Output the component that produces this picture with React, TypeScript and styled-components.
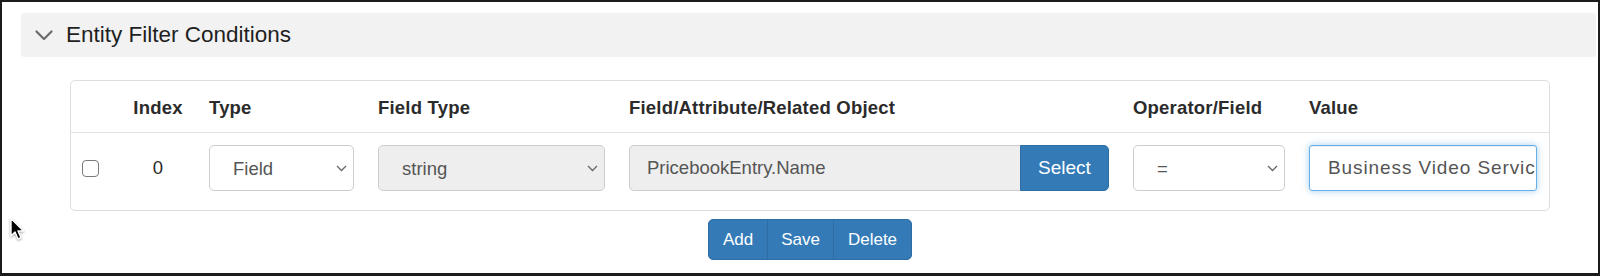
import React from "react";
import styled, { createGlobalStyle, css } from "styled-components";

const GlobalStyle = createGlobalStyle`
  html, body { margin: 0; padding: 0; background: #fff; }
  body { font-family: "Liberation Sans", Arial, Helvetica, sans-serif; }
  * { box-sizing: border-box; }
`;

const Frame = styled.div`
  position: relative;
  width: 1600px;
  height: 276px;
  border: 2px solid #1c1c1c;
  border-bottom-width: 3px;
  padding: 11px 2px 0 19px;
  overflow: hidden;
  background: #fff;
`;

const PanelHeader = styled.div`
  display: flex;
  align-items: center;
  height: 44px;
  padding-left: 14px;
  gap: 13px;
  background: #f2f2f2;
  border-radius: 3px;
`;

const Title = styled.span`
  font-size: 22.5px;
  color: #1f1f1f;
`;

const PanelBody = styled.div`
  display: flex;
  flex-direction: column;
  align-items: center;
  padding: 23px 46px 0 49px;
`;

const Table = styled.div`
  width: 100%;
  border: 1px solid #dedede;
  border-radius: 5px;
`;

const cols = "48px 78px 169px 251px 504px 176px 1fr";

const HeadRow = styled.div`
  display: grid;
  grid-template-columns: ${cols};
  height: 52px;
  align-items: center;
  border-bottom: 1px solid #e2e2e2;
  padding-top: 2px;
`;

const HeadCell = styled.div<{ $center?: boolean }>`
  padding: 0 12px;
  font-size: 18.5px;
  font-weight: 700;
  color: #2b2b2b;
  letter-spacing: 0.2px;
  text-align: ${(p) => (p.$center ? "center" : "left")};
  white-space: nowrap;
`;

const DataRow = styled.div`
  display: grid;
  grid-template-columns: ${cols};
  align-items: center;
  padding: 12px 0 19px;
`;

const Cell = styled.div<{ $center?: boolean; $padLeft?: number }>`
  padding: 0 12px 0 ${(p) => (p.$padLeft ?? 12)}px;
  font-size: 18.5px;
  color: #2b2b2b;
  display: flex;
  justify-content: ${(p) => (p.$center ? "center" : "flex-start")};
`;

const Check = styled.input`
  appearance: none;
  margin: 0;
  width: 17px;
  height: 17px;
  border: 1px solid #7a7a7a;
  border-radius: 4px;
  background: #fff;
`;

const SelectWrap = styled.div`
  position: relative;
  width: 100%;
  height: 46px;
`;

const NativeSelect = styled.select<{ $disabled?: boolean }>`
  appearance: none;
  width: 100%;
  height: 100%;
  margin: 0;
  padding: 0 30px 0 23px;
  font-family: "Liberation Sans", Arial, sans-serif;
  font-size: 18.5px;
  color: #555;
  border: 1px solid #cdcdcd;
  border-radius: 5px;
  background: ${(p) => (p.$disabled ? "#eeeeee" : "#fff")};
  outline: none;
`;

const Caret = styled.svg`
  position: absolute;
  right: 7px;
  top: 20px;
  width: 11px;
  height: 7px;
  pointer-events: none;
`;

const inputBase = css`
  height: 46px;
  margin: 0;
  font-family: "Liberation Sans", Arial, sans-serif;
  font-size: 18.5px;
  color: #555;
  outline: none;
`;

const InputGroup = styled.div`
  display: flex;
  width: 100%;
`;

const ReadInput = styled.input`
  ${inputBase};
  flex: 1;
  min-width: 0;
  padding: 0 12px 0 17px;
  background: #eeeeee;
  border: 1px solid #cdcdcd;
  border-right: none;
  border-radius: 5px 0 0 5px;
`;

const AddonButton = styled.button`
  width: 89px;
  height: 46px;
  margin: 0;
  font-family: "Liberation Sans", Arial, sans-serif;
  font-size: 19px;
  color: #fff;
  background: #337ab7;
  border: 1px solid #2e6da4;
  border-radius: 0 5px 5px 0;
`;

const ValueInput = styled.input`
  ${inputBase};
  width: 100%;
  padding: 0 0 0 18px;
  font-size: 19px;
  letter-spacing: 0.9px;
  background: #fff;
  border: 1px solid #66afe9;
  border-radius: 3px;
  box-shadow: inset 0 1px 1px rgba(0, 0, 0, 0.075), 0 0 7px rgba(102, 175, 233, 0.6);
`;

const ButtonGroup = styled.div`
  display: flex;
  margin-top: 8px;
`;

const GroupButton = styled.button<{ $pos: "first" | "mid" | "last" }>`
  height: 41px;
  padding: 0 13.5px;
  margin: 0 0 0 ${(p) => (p.$pos === "first" ? "0" : "-1px")};
  font-family: "Liberation Sans", Arial, sans-serif;
  font-size: 17px;
  color: #fff;
  background: #337ab7;
  border: 1px solid #2e6da4;
  border-radius: ${(p) =>
    p.$pos === "first" ? "5px 0 0 5px" : p.$pos === "last" ? "0 5px 5px 0" : "0"};
`;

const Pointer = styled.svg`
  position: absolute;
  left: 7px;
  top: 215px;
  width: 16px;
  height: 25px;
  filter: drop-shadow(0 1px 1px rgba(0, 0, 0, 0.35));
`;

const ChevronDown = () => (
  <svg width="18" height="11" viewBox="0 0 18 11" aria-hidden>
    <path d="M1.5 1.5 L9 9 L16.5 1.5" fill="none" stroke="#6b6b6b" strokeWidth="2.2" strokeLinecap="round" strokeLinejoin="round" />
  </svg>
);

const Select = ({ value, disabled }: { value: string; disabled?: boolean }) => (
  <SelectWrap>
    <NativeSelect $disabled={disabled} defaultValue={value}>
      <option value={value}>{value}</option>
    </NativeSelect>
    <Caret viewBox="0 0 11 7" aria-hidden>
      <path d="M1 1 L5.5 5.5 L10 1" fill="none" stroke="#666" strokeWidth="1.3" />
    </Caret>
  </SelectWrap>
);

export default function App() {
  return (
    <>
      <GlobalStyle />
      <Frame>
        <PanelHeader>
          <ChevronDown />
          <Title>Entity Filter Conditions</Title>
        </PanelHeader>
        <PanelBody>
          <Table>
            <HeadRow>
              <HeadCell />
              <HeadCell $center>Index</HeadCell>
              <HeadCell>Type</HeadCell>
              <HeadCell>Field Type</HeadCell>
              <HeadCell>Field/Attribute/Related Object</HeadCell>
              <HeadCell>Operator/Field</HeadCell>
              <HeadCell>Value</HeadCell>
            </HeadRow>
            <DataRow>
              <Cell $padLeft={11}>
                <Check type="checkbox" />
              </Cell>
              <Cell $center>0</Cell>
              <Cell>
                <Select value="Field" />
              </Cell>
              <Cell>
                <Select value="string" disabled />
              </Cell>
              <Cell>
                <InputGroup>
                  <ReadInput readOnly value="PricebookEntry.Name" />
                  <AddonButton>Select</AddonButton>
                </InputGroup>
              </Cell>
              <Cell>
                <Select value="=" />
              </Cell>
              <Cell>
                <ValueInput defaultValue="Business Video Services" />
              </Cell>
            </DataRow>
          </Table>
          <ButtonGroup>
            <GroupButton $pos="first">Add</GroupButton>
            <GroupButton $pos="mid">Save</GroupButton>
            <GroupButton $pos="last">Delete</GroupButton>
          </ButtonGroup>
        </PanelBody>
        <Pointer viewBox="0 0 16 25" aria-hidden>
          <path d="M2 1.5 L2 19 L6 15 L9 22 L12 20.7 L9 14 L14.5 14 Z" fill="#000" stroke="#fff" strokeWidth="1.4" strokeLinejoin="round" />
        </Pointer>
      </Frame>
    </>
  );
}
